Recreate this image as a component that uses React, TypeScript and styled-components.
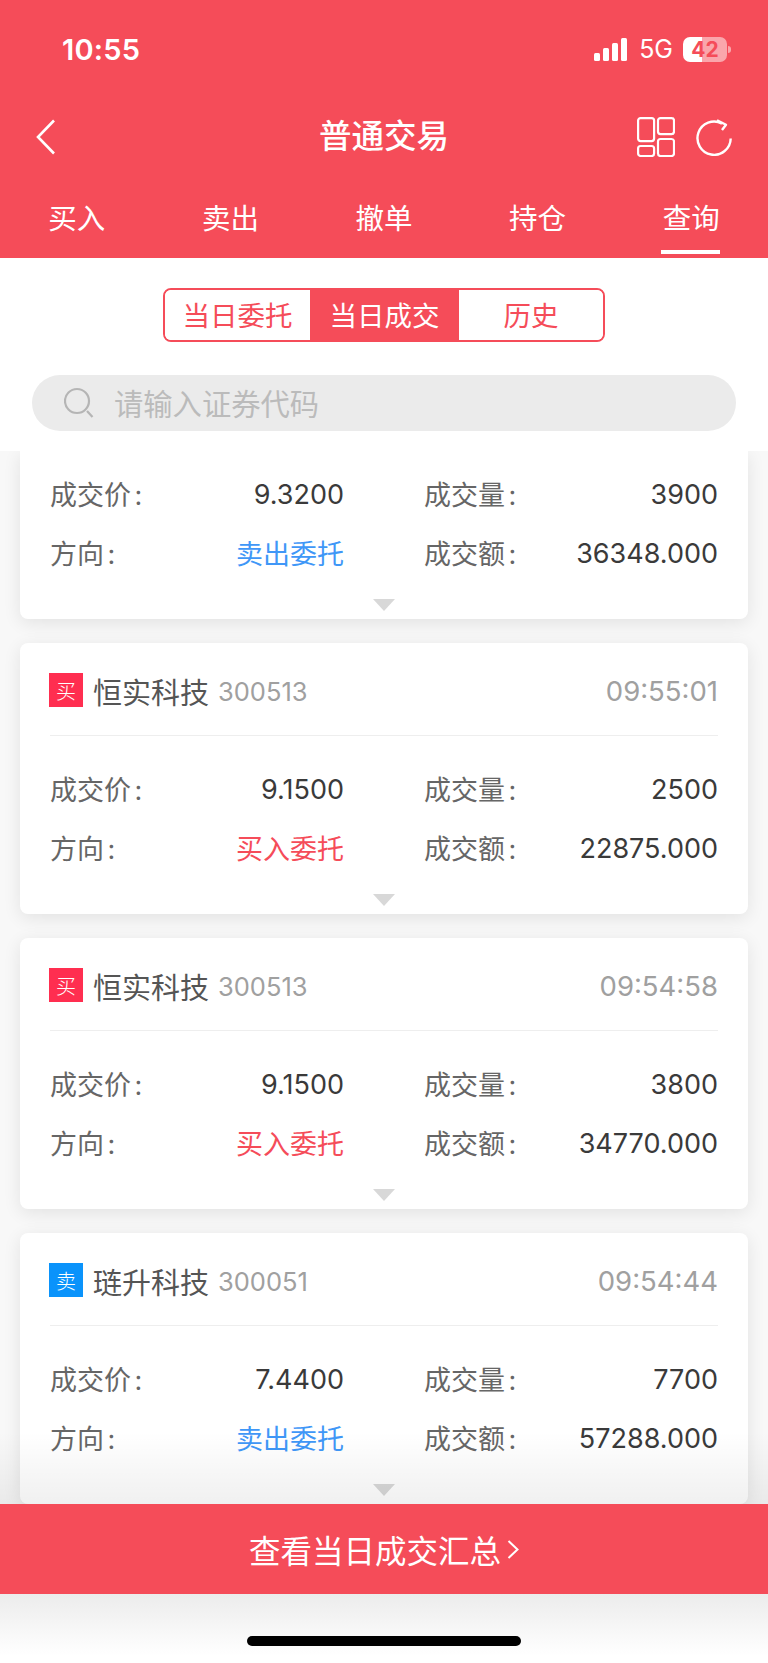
import styled, { createGlobalStyle } from 'styled-components';

const RED = '#f54c59';
const BLUE = '#3f97f7';

const GlobalStyle = createGlobalStyle`
	html, body {
		margin: 0;
		padding: 0;
		background: #fff;
	}
	* {
		box-sizing: border-box;
	}
`;

const Page = styled.div`
	width: 768px;
	height: 1663px;
	display: flex;
	flex-direction: column;
	overflow: hidden;
	background: #f8f8f8;
	font-family: Inter, 'Noto Sans CJK SC', sans-serif;
`;

const Header = styled.header`
	height: 258px;
	flex: none;
	background: ${RED};
	color: #fff;
	display: flex;
	flex-direction: column;
`;

const StatusBar = styled.div`
	height: 92px;
	padding: 6px 41px 0 62px;
	display: flex;
	align-items: center;
	justify-content: space-between;
`;

const Clock = styled.span`
	font-size: 29px;
	font-weight: 600;
	letter-spacing: 0.2px;
`;

const StatusRight = styled.div`
	display: flex;
	align-items: center;
`;

const Network = styled.span`
	font-size: 25px;
	font-weight: 400;
	margin: 0 10px 0 11px;
`;

const Battery = styled.div`
	position: relative;
	width: 44px;
	height: 25px;
	border-radius: 7px;
	background: linear-gradient(90deg, #fff 0 19px, rgba(255, 255, 255, 0.5) 19px 100%);
	color: ${RED};
	font-size: 21px;
	font-weight: 700;
	line-height: 25px;
	text-align: center;

	&::after {
		content: '';
		position: absolute;
		right: -4px;
		top: 9px;
		width: 3px;
		height: 7px;
		border-radius: 0 3px 3px 0;
		background: rgba(255, 255, 255, 0.5);
	}
`;

const NavBar = styled.div`
	height: 88px;
	padding: 2px 36px 0;
	display: grid;
	grid-template-columns: 1fr auto 1fr;
	align-items: center;
`;

const Title = styled.h1`
	margin: 0;
	font-size: 32.5px;
	font-weight: 500;
	line-height: 1;
`;

const NavActions = styled.div`
	display: flex;
	align-items: center;
	justify-content: flex-end;
	gap: 21px;
`;

const Tabs = styled.nav`
	flex: 1;
	display: grid;
	grid-template-columns: repeat(5, 1fr);
`;

const Tab = styled.div<{ $active?: boolean }>`
	position: relative;
	display: flex;
	align-items: center;
	justify-content: center;
	font-size: 28.5px;
	font-weight: 400;
	padding-bottom: 5px;

	&::after {
		content: '';
		display: ${(p) => (p.$active ? 'block' : 'none')};
		position: absolute;
		left: 50%;
		bottom: 4px;
		width: 59px;
		height: 4px;
		margin-left: -30px;
		background: #fff;
	}
`;

const FilterPanel = styled.section`
	height: 193px;
	flex: none;
	background: #fff;
	padding: 30px 32px 0;
	display: flex;
	flex-direction: column;
	align-items: center;
`;

const Segments = styled.div`
	width: 442px;
	height: 54px;
	border: 2px solid ${RED};
	border-radius: 8px;
	display: grid;
	grid-template-columns: 145px 149px 1fr;
	overflow: hidden;
`;

const Segment = styled.div<{ $active?: boolean }>`
	display: flex;
	align-items: center;
	justify-content: center;
	padding-bottom: 2px;
	font-size: 27.5px;
	color: ${(p) => (p.$active ? '#fff' : RED)};
	background: ${(p) => (p.$active ? RED : '#fff')};
`;

const SearchBox = styled.div`
	width: 704px;
	height: 56px;
	margin-top: 33px;
	padding: 0 0 2px 32px;
	border-radius: 28px;
	background: #ebebeb;
	display: flex;
	align-items: center;
	gap: 20px;
	font-size: 29.3px;
	color: #bbb;
`;

const List = styled.main`
	position: relative;
	flex: 1;
	min-height: 0;
	padding: 0 20px;
	display: flex;
	flex-direction: column;
	gap: 24px;
	overflow: hidden;

	&::after {
		content: '';
		position: absolute;
		left: 0;
		right: 0;
		bottom: 0;
		height: 72px;
		background: linear-gradient(rgba(0, 0, 0, 0), rgba(0, 0, 0, 0.06));
		pointer-events: none;
	}
`;

const Card = styled.article<{ $clipped?: boolean }>`
	flex: none;
	padding: ${(p) => (p.$clipped ? '14px' : '30px')} 30px 8px 30px;
	background: #fff;
	border-radius: ${(p) => (p.$clipped ? '0 0 8px 8px' : '8px')};
	box-shadow: 0 4px 18px rgba(0, 0, 0, 0.09);
	display: flex;
	flex-direction: column;
`;

const CardHead = styled.div`
	height: 63px;
	margin-bottom: 24px;
	padding-bottom: 28px;
	border-bottom: 1px solid #eee;
	display: flex;
	align-items: center;
`;

const SideBadge = styled.span<{ $sell?: boolean }>`
	width: 34px;
	height: 34px;
	margin: 0 10px 0 -1px;
	display: flex;
	align-items: center;
	justify-content: center;
	font-size: 20px;
	font-weight: 300;
	color: #fff;
	background: ${(p) => (p.$sell ? '#0a93fb' : '#ff2e50')};
`;

const StockName = styled.span`
	padding-top: 2px;
	font-size: 29px;
	font-weight: 400;
	color: #555;
`;

const StockCode = styled.span`
	margin-left: 9px;
	padding-top: 2px;
	font-size: 25.5px;
	color: #a0a0a0;
`;

const DealTime = styled.span`
	margin-left: auto;
	padding-top: 2px;
	font-size: 27.5px;
	color: #a0a0a0;
`;

const Stats = styled.div`
	display: grid;
	grid-template-columns: 294px 294px;
	column-gap: 80px;
	grid-auto-rows: 59px;
`;

const Stat = styled.div`
	display: flex;
	align-items: center;
	justify-content: space-between;
`;

const StatLabel = styled.span`
	padding-bottom: 2px;
	font-size: 27px;
	word-spacing: -4px;
	color: #666;
`;

const StatValue = styled.span<{ $color?: string }>`
	padding-bottom: ${(p) => (p.$color ? '3px' : '0')};
	font-size: 27px;
	color: ${(p) => p.$color || '#3a3a3a'};
`;

const Caret = styled.div`
	width: 0;
	height: 0;
	margin: 16px auto 0;
	border-left: 11px solid transparent;
	border-right: 11px solid transparent;
	border-top: 12px solid #d8d8d8;
	align-self: center;
`;

const SummaryBar = styled.footer`
	height: 90px;
	flex: none;
	background: ${RED};
	color: #fff;
	font-size: 31.5px;
	display: flex;
	align-items: center;
	justify-content: center;
	gap: 6px;
`;

const BottomArea = styled.div`
	height: 69px;
	flex: none;
	padding-top: 42px;
	background: linear-gradient(#ececec, #fff 90%);
`;

const HomeBar = styled.div`
	width: 274px;
	height: 10px;
	margin: 0 auto;
	border-radius: 5px;
	background: #000;
`;

const SignalIcon = () => (
	<svg width="34" height="23" viewBox="0 0 34 23" fill="#fff">
		<rect x="0" y="15" width="6" height="8" rx="1.5" />
		<rect x="9" y="10" width="6" height="13" rx="1.5" />
		<rect x="18" y="5" width="6" height="18" rx="1.5" />
		<rect x="27" y="0" width="6" height="23" rx="1.5" />
	</svg>
);

const BackIcon = () => (
	<svg width="20" height="36" viewBox="0 0 20 36" fill="none" stroke="#fff" strokeWidth="2.6">
		<path d="M18 1.5 2 18l16 16.5" />
	</svg>
);

const GridIcon = () => (
	<svg width="38" height="40" viewBox="0 0 38 40" fill="none" stroke="#fff" strokeWidth="2.2">
		<rect x="1.1" y="1.1" width="16" height="23" rx="2.5" />
		<rect x="21" y="1.1" width="16" height="16" rx="2.5" />
		<rect x="1.1" y="29" width="16" height="10" rx="2.5" />
		<rect x="21" y="22" width="16" height="17" rx="2.5" />
	</svg>
);

const RefreshIcon = () => (
	<svg width="36" height="37" viewBox="0 0 36 37" fill="none" stroke="#fff" strokeWidth="2.4" strokeLinejoin="round">
		<path d="M34.7 19.5A16.6 16.6 0 1 1 26 4.6" />
		<path d="M21 1.2 30 5.8 26 11" />
	</svg>
);

const SearchIcon = () => (
	<svg width="30" height="31" viewBox="0 0 30 31" fill="none" stroke="#b5b5b5" strokeWidth="2.2">
		<circle cx="13" cy="14" r="12" />
		<path d="m23 24 5.5 6" />
	</svg>
);

const ChevronIcon = () => (
	<svg width="12" height="19" viewBox="0 0 12 19" fill="none" stroke="#fff" strokeWidth="2">
		<path d="m1.5 1 9 8.5-9 8.5" />
	</svg>
);

type Deal = {
	side: 'buy' | 'sell';
	name?: string;
	code?: string;
	time?: string;
	price: string;
	volume: string;
	amount: string;
};

const deals: Deal[] = [
	{ side: 'sell', price: '9.3200', volume: '3900', amount: '36348.000' },
	{ side: 'buy', name: '恒实科技', code: '300513', time: '09:55:01', price: '9.1500', volume: '2500', amount: '22875.000' },
	{ side: 'buy', name: '恒实科技', code: '300513', time: '09:54:58', price: '9.1500', volume: '3800', amount: '34770.000' },
	{ side: 'sell', name: '琏升科技', code: '300051', time: '09:54:44', price: '7.4400', volume: '7700', amount: '57288.000' },
];

const DealCard = ({ deal }: { deal: Deal }) => {
	const isSell = deal.side === 'sell';
	return (
		<Card $clipped={!deal.name}>
			{deal.name && (
				<CardHead>
					<SideBadge $sell={isSell}>{isSell ? '卖' : '买'}</SideBadge>
					<StockName>{deal.name}</StockName>
					<StockCode>{deal.code}</StockCode>
					<DealTime>{deal.time}</DealTime>
				</CardHead>
			)}
			<Stats>
				<Stat>
					<StatLabel>成交价 :</StatLabel>
					<StatValue>{deal.price}</StatValue>
				</Stat>
				<Stat>
					<StatLabel>成交量 :</StatLabel>
					<StatValue>{deal.volume}</StatValue>
				</Stat>
				<Stat>
					<StatLabel>方向 :</StatLabel>
					<StatValue $color={isSell ? BLUE : RED}>{isSell ? '卖出委托' : '买入委托'}</StatValue>
				</Stat>
				<Stat>
					<StatLabel>成交额 :</StatLabel>
					<StatValue>{deal.amount}</StatValue>
				</Stat>
			</Stats>
			<Caret />
		</Card>
	);
};

const App = () => {
	return (
		<>
			<GlobalStyle />
			<Page>
				<Header>
					<StatusBar>
						<Clock>10:55</Clock>
						<StatusRight>
							<SignalIcon />
							<Network>5G</Network>
							<Battery>42</Battery>
						</StatusRight>
					</StatusBar>
					<NavBar>
						<BackIcon />
						<Title>普通交易</Title>
						<NavActions>
							<GridIcon />
							<RefreshIcon />
						</NavActions>
					</NavBar>
					<Tabs>
						<Tab>买入</Tab>
						<Tab>卖出</Tab>
						<Tab>撤单</Tab>
						<Tab>持仓</Tab>
						<Tab $active>查询</Tab>
					</Tabs>
				</Header>
				<FilterPanel>
					<Segments>
						<Segment>当日委托</Segment>
						<Segment $active>当日成交</Segment>
						<Segment>历史</Segment>
					</Segments>
					<SearchBox>
						<SearchIcon />
						请输入证券代码
					</SearchBox>
				</FilterPanel>
				<List>
					{deals.map((deal, i) => (
						<DealCard key={i} deal={deal} />
					))}
				</List>
				<SummaryBar>
					查看当日成交汇总
					<ChevronIcon />
				</SummaryBar>
				<BottomArea>
					<HomeBar />
				</BottomArea>
			</Page>
		</>
	);
};

export default App;
